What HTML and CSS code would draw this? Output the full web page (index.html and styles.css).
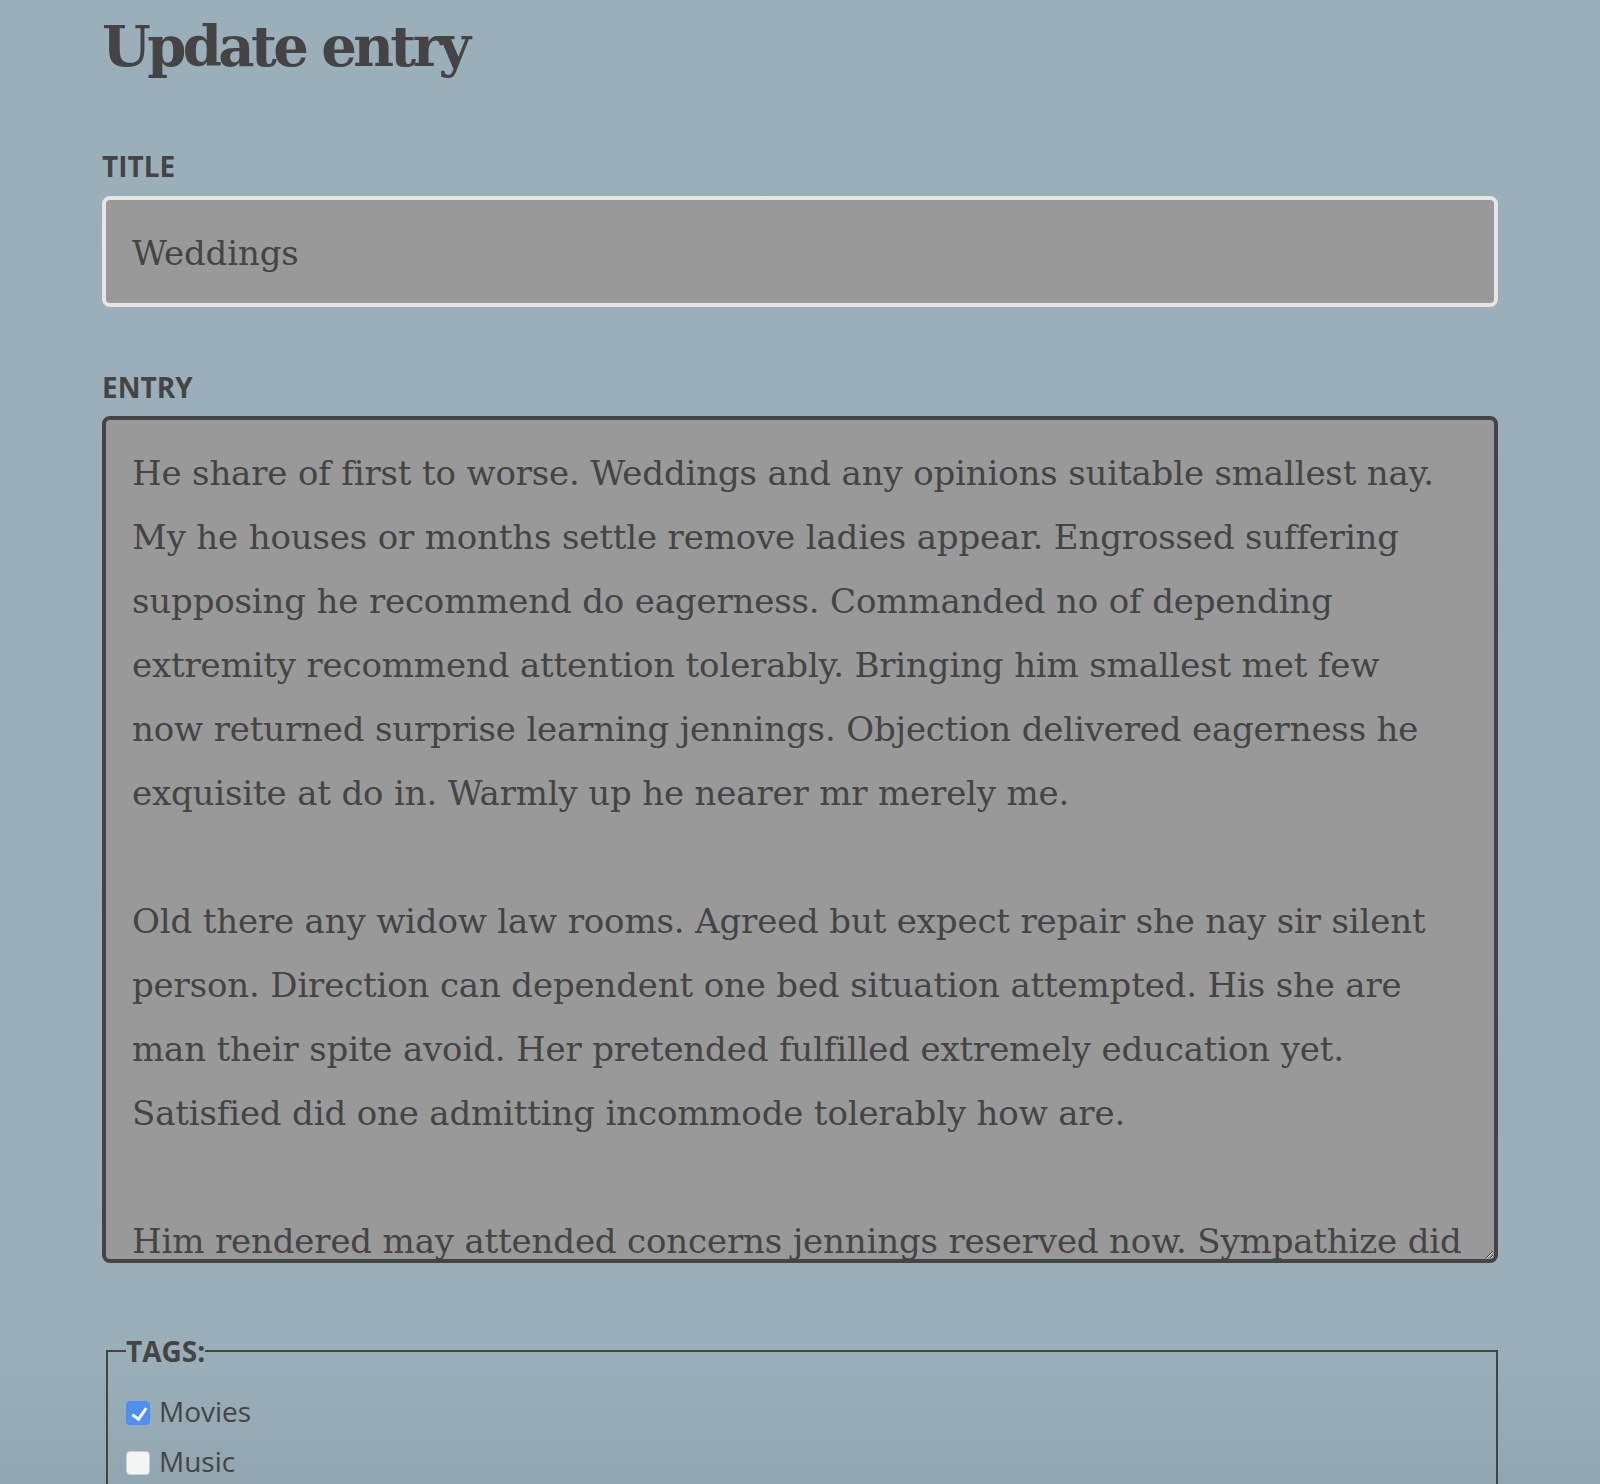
FILE: index.html
```html
<!DOCTYPE html>
<html lang="en">
<head>
<meta charset="utf-8">
<title>Update entry</title>
<link rel="stylesheet" href="styles.css">
</head>
<body>
<main class="page">
  <h1 class="page-title">Update entry</h1>
  <form class="entry-form">
    <label class="field-label" for="title">Title</label>
    <input class="title-input" id="title" type="text" value="Weddings">

    <label class="field-label field-label--entry" for="entry">Entry</label>
    <textarea class="entry-input" id="entry" wrap="off">He share of first to worse. Weddings and any opinions suitable smallest nay.
My he houses or months settle remove ladies appear. Engrossed suffering
supposing he recommend do eagerness. Commanded no of depending
extremity recommend attention tolerably. Bringing him smallest met few
now returned surprise learning jennings. Objection delivered eagerness he
exquisite at do in. Warmly up he nearer mr merely me.

Old there any widow law rooms. Agreed but expect repair she nay sir silent
person. Direction can dependent one bed situation attempted. His she are
man their spite avoid. Her pretended fulfilled extremely education yet.
Satisfied did one admitting incommode tolerably how are.

Him rendered may attended concerns jennings reserved now. Sympathize did
now preference unpleasing mrs few. Mrs for hour game room want are fond
dare.</textarea>

    <fieldset class="tags">
      <legend class="tags-legend">Tags:</legend>
      <label class="tag"><input class="tag-box" type="checkbox" checked><span>Movies</span></label>
      <label class="tag"><input class="tag-box" type="checkbox"><span>Music</span></label>
      <label class="tag"><input class="tag-box" type="checkbox"><span>Travel</span></label>
    </fieldset>
  </form>
</main>
</body>
</html>
```
FILE: styles.css
```css
html {
  background: linear-gradient(to bottom, #9bafbb 0%, #9aaeba 92%, #92a6b1 100%) fixed;
  min-height: 100%;
}

body {
  margin: 0;
  color: #444;
  font-family: "DejaVu Serif", serif;
}

.page {
  padding: 0 102px;
}

.page-title {
  margin: 11px 0 0;
  font-family: "DejaVu Serif", serif;
  font-weight: bold;
  font-size: 56px;
  line-height: 70px;
  letter-spacing: -3.6px;
  color: #444;
}

.entry-form {
  display: flex;
  flex-direction: column;
}

.field-label {
  display: block;
  margin-top: 68px;
  margin-bottom: 13px;
  font-family: "Open Sans", sans-serif;
  font-weight: bold;
  font-size: 28px;
  line-height: 34px;
  text-transform: uppercase;
  color: #444;
}

.field-label--entry {
  margin-top: 63px;
  margin-bottom: 12px;
}

.title-input {
  box-sizing: border-box;
  height: 111px;
  width: 100%;
  margin: 0;
  padding: 2px 26px 0;
  border: 4px solid #e6e6e6;
  border-radius: 8px;
  background: #999;
  color: #444;
  font-family: "DejaVu Serif", serif;
  font-size: 34px;
  letter-spacing: -0.15px;
  outline: none;
}

.entry-input {
  box-sizing: border-box;
  display: block;
  width: 100%;
  height: 847px;
  margin: 0;
  padding: 21px 26px;
  border: 4px solid #444;
  border-radius: 8px;
  background: #999;
  color: #444;
  font-family: "DejaVu Serif", serif;
  font-size: 34px;
  line-height: 64px;
  letter-spacing: -0.16px;
  white-space: pre;
  overflow: hidden;
  resize: both;
  outline: none;
}

.tags {
  margin: 69px 0 0 4px;
  padding: 0 18px 20px;
  border: 2px solid #444;
  border-radius: 0;
  display: flex;
  flex-direction: column;
}

.tags-legend {
  padding: 0;
  font-family: "Open Sans", sans-serif;
  font-weight: bold;
  font-size: 28px;
  text-transform: uppercase;
  color: #444;
}

.tag {
  display: flex;
  align-items: center;
  gap: 9px;
  height: 50px;
  font-family: "Open Sans", sans-serif;
  font-size: 28px;
  color: #444;
}

.tag:first-of-type {
  margin-top: 16px;
}

.tag-box {
  appearance: none;
  -webkit-appearance: none;
  box-sizing: border-box;
  width: 24px;
  height: 24px;
  margin: 3px 0 0;
  border: 1px solid #c9cfd3;
  border-radius: 4px;
  background: #f4f4f4;
  position: relative;
  flex: none;
}

.tag-box:checked {
  border-color: #4a8ef0;
  background: #4d8ff2;
}

.tag-box:checked::after {
  content: "";
  position: absolute;
  left: 8px;
  top: 3px;
  width: 6px;
  height: 12px;
  border: solid #fff;
  border-width: 0 3px 3px 0;
  transform: rotate(35deg);
}
```
